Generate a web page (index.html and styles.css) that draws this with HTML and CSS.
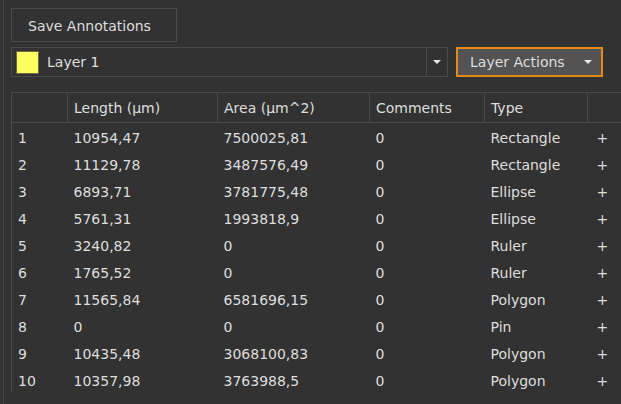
FILE: index.html
```html
<!DOCTYPE html>
<html>
<head>
<meta charset="utf-8">
<link rel="stylesheet" href="styles.css">
</head>
<body>
<div class="panel">
  <div class="toolbar">
    <button class="btn save">Save Annotations</button>
  </div>
  <div class="layer-row">
    <div class="combo">
      <span class="swatch"></span>
      <span class="combo-text">Layer 1</span>
      <span class="combo-arrow"><span class="tri"></span></span>
    </div>
    <button class="btn actions"><span>Layer Actions</span><span class="tri"></span></button>
  </div>
  <table class="grid">
    <thead>
      <tr>
        <th class="c-idx"></th>
        <th class="c-len">Length (µm)</th>
        <th class="c-area">Area (µm^2)</th>
        <th class="c-com">Comments</th>
        <th class="c-type">Type</th>
        <th class="c-add"></th>
      </tr>
    </thead>
    <tbody>
      <tr><td>1</td><td>10954,47</td><td>7500025,81</td><td>0</td><td>Rectangle</td><td class="add">+</td></tr>
      <tr><td>2</td><td>11129,78</td><td>3487576,49</td><td>0</td><td>Rectangle</td><td class="add">+</td></tr>
      <tr><td>3</td><td>6893,71</td><td>3781775,48</td><td>0</td><td>Ellipse</td><td class="add">+</td></tr>
      <tr><td>4</td><td>5761,31</td><td>1993818,9</td><td>0</td><td>Ellipse</td><td class="add">+</td></tr>
      <tr><td>5</td><td>3240,82</td><td>0</td><td>0</td><td>Ruler</td><td class="add">+</td></tr>
      <tr><td>6</td><td>1765,52</td><td>0</td><td>0</td><td>Ruler</td><td class="add">+</td></tr>
      <tr><td>7</td><td>11565,84</td><td>6581696,15</td><td>0</td><td>Polygon</td><td class="add">+</td></tr>
      <tr><td>8</td><td>0</td><td>0</td><td>0</td><td>Pin</td><td class="add">+</td></tr>
      <tr><td>9</td><td>10435,48</td><td>3068100,83</td><td>0</td><td>Polygon</td><td class="add">+</td></tr>
      <tr><td>10</td><td>10357,98</td><td>3763988,5</td><td>0</td><td>Polygon</td><td class="add">+</td></tr>
    </tbody>
  </table>
</div>
</body>
</html>
```
FILE: styles.css
```css
html, body {
  margin: 0;
  padding: 0;
  background: #323232;
  height: 100%;
  overflow: hidden;
}
body {
  font-family: "DejaVu Sans", sans-serif;
  font-size: 14px;
  color: #dedede;
}
.panel {
  margin-left: 3px;
  border-left: 1px solid #474747;
  padding: 8px 0 0 7px;
  height: 100%;
  box-sizing: border-box;
}
.btn {
  font-family: inherit;
  font-size: 14px;
  color: #dedede;
  box-sizing: border-box;
  cursor: default;
}
.save {
  display: block;
  width: 166px;
  height: 34px;
  background: #323232;
  border: 1px solid #4a4a4a;
  padding: 1px 0 0 16px;
  text-align: left;
}
.layer-row {
  display: flex;
  align-items: stretch;
  margin-top: 5px;
  height: 30px;
}
.combo {
  width: 437px;
  box-sizing: border-box;
  border: 1px solid #4a4a4a;
  display: flex;
  align-items: center;
  padding-left: 4px;
}
.swatch {
  width: 21px;
  height: 21px;
  background: #fefe60;
  border: 1px solid #6a6a3a;
}
.combo-text {
  margin-left: 8px;
  flex: 1;
}
.combo-arrow {
  width: 20px;
  align-self: stretch;
  border-left: 1px solid #4a4a4a;
  display: flex;
  align-items: center;
  justify-content: center;
}
.tri {
  width: 0;
  height: 0;
  border-left: 4px solid transparent;
  border-right: 4px solid transparent;
  border-top: 4px solid #e8e8e8;
}
.actions {
  margin-left: 8px;
  width: 147px;
  background: #535353;
  border: 2px solid #e48a16;
  display: flex;
  align-items: center;
  justify-content: space-between;
  padding: 0 9px 0 12px;
}
.grid {
  margin-top: 15px;
  border-collapse: collapse;
  table-layout: fixed;
  width: 610px;
  border-top: 1px solid #4a4a4a;
}
.grid th, .grid td {
  box-sizing: border-box;
  white-space: nowrap;
  overflow: hidden;
}
.grid th {
  height: 30px;
  font-weight: normal;
  text-align: left;
  padding: 0 0 0 6px;
  border-right: 1px solid #4a4a4a;
  border-bottom: 1px solid #4a4a4a;
}
.grid th:last-child {
  border-right: none;
}
.grid th:first-child, .grid td:first-child {
  border-left: 1px solid #4a4a4a;
}
.grid td {
  height: 27px;
  padding: 3px 0 0 6px;
}
.c-idx { width: 56px; }
.c-len { width: 150px; }
.c-area { width: 152px; }
.c-com { width: 115px; }
.c-type { width: 103px; }
.c-add { width: 34px; }
.grid td.add {
  padding-left: 9px;
}
```
